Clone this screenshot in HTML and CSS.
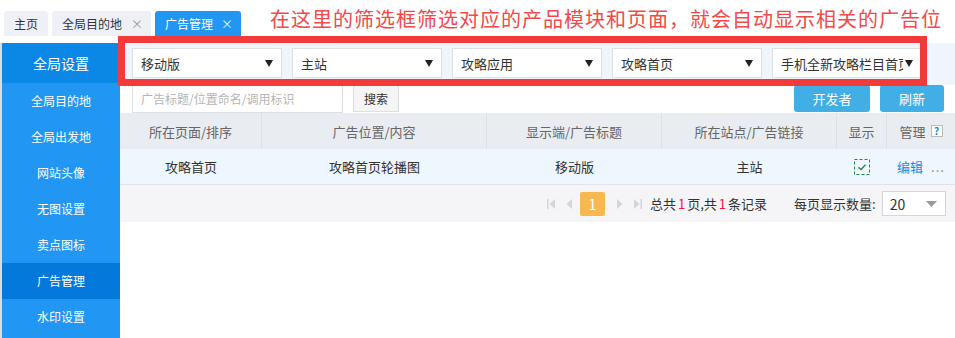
FILE: index.html
```html
<!DOCTYPE html>
<html lang="zh-CN">
<head>
    <meta charset="UTF-8">
    <meta name="viewport" content="width=device-width, initial-scale=1.0">
    <title>广告管理</title>
    <link rel="stylesheet" href="styles.css">
</head>
<body>
<div class="page">
    <!-- Tab bar -->
    <div class="tabs">
        <div class="tab">主页</div>
        <div class="tab">全局目的地<span class="close">×</span></div>
        <div class="tab active">广告管理<span class="close">×</span></div>
    </div>

    <div class="layout">
        <!-- Sidebar -->
        <div class="sidebar">
            <div class="side-head">全局设置</div>
            <div class="side-item">全局目的地</div>
            <div class="side-item">全局出发地</div>
            <div class="side-item">网站头像</div>
            <div class="side-item">无图设置</div>
            <div class="side-item">卖点图标</div>
            <div class="side-item active">广告管理</div>
            <div class="side-item">水印设置</div>
        </div>

        <!-- Main -->
        <div class="main">
            <div class="filters">
                <div class="select"><span class="val">移动版</span><span class="caret"></span></div>
                <div class="select"><span class="val">主站</span><span class="caret"></span></div>
                <div class="select"><span class="val">攻略应用</span><span class="caret"></span></div>
                <div class="select"><span class="val">攻略首页</span><span class="caret"></span></div>
                <div class="select"><span class="val">手机全新攻略栏目首页</span><span class="caret"></span></div>
            </div>

            <div class="toolbar">
                <div class="search">
                    <input type="text" placeholder="广告标题/位置命名/调用标识">
                    <button class="btn-search">搜索</button>
                </div>
                <div class="actions">
                    <button class="btn-blue dev">开发者</button>
                    <button class="btn-blue">刷新</button>
                </div>
            </div>

            <div class="table">
                <div class="row head">
                    <div class="c1">所在页面/排序</div>
                    <div class="c2">广告位置/内容</div>
                    <div class="c3">显示端/广告标题</div>
                    <div class="c4">所在站点/广告链接</div>
                    <div class="c5">显示</div>
                    <div class="c6">管理 <span class="help">?</span></div>
                </div>
                <div class="row body">
                    <div class="c1">攻略首页</div>
                    <div class="c2">攻略首页轮播图</div>
                    <div class="c3">移动版</div>
                    <div class="c4">主站</div>
                    <div class="c5">
                        <svg width="16" height="16" viewBox="0 0 16 16">
                            <rect x="0.5" y="0.5" width="15" height="15" fill="none" stroke="#1e8a3c" stroke-dasharray="3 2"/>
                            <path d="M4.5 8.2 L7 10.5 L11.5 5.8" fill="none" stroke="#1e8a3c" stroke-width="1.3"/>
                        </svg>
                    </div>
                    <div class="c6 ops"><span class="edit">编辑</span><span class="more">...</span></div>
                </div>
            </div>

            <div class="pager">
                <span class="pg-icon">
                    <svg width="10" height="12" viewBox="0 0 10 12"><rect x="1" y="1" width="1.5" height="10" fill="#d5d5d5"/><path d="M9 1 L3.5 6 L9 11 Z" fill="#d5d5d5"/></svg>
                </span>
                <span class="pg-icon">
                    <svg width="8" height="12" viewBox="0 0 8 12"><path d="M7 1 L1.5 6 L7 11 Z" fill="#d5d5d5"/></svg>
                </span>
                <span class="pg-num">1</span>
                <span class="pg-icon">
                    <svg width="8" height="12" viewBox="0 0 8 12"><path d="M1 1 L6.5 6 L1 11 Z" fill="#d5d5d5"/></svg>
                </span>
                <span class="pg-icon">
                    <svg width="10" height="12" viewBox="0 0 10 12"><path d="M1 1 L6.5 6 L1 11 Z" fill="#d5d5d5"/><rect x="7.5" y="1" width="1.5" height="10" fill="#d5d5d5"/></svg>
                </span>
                <span class="pg-text">总共<em>1</em>页,共<em>1</em>条记录</span>
                <span class="pg-size">每页显示数量:</span>
                <div class="pg-select">20
                    <svg width="11" height="6" viewBox="0 0 11 6"><path d="M0 0 L11 0 L5.5 6 Z" fill="#999"/></svg>
                </div>
            </div>
        </div>
    </div>

    <!-- Annotation over the screenshot -->
    <div class="note">在这里的筛选框筛选对应的产品模块和页面，就会自动显示相关的广告位</div>
    <div class="note-box"></div>
</div>
</body>
</html>
```

FILE: styles.css
```css
* {
    box-sizing: border-box;
}
body {
    margin: 0;
    padding: 0;
    background: #fff;
    font-family: "Noto Sans CJK SC", "Noto Sans", sans-serif;
    font-size: 13px;
    color: #333;
}
.page {
    position: relative;
    width: 955px;
    height: 338px;
    overflow: hidden;
    white-space: nowrap;
}
.tabs {
    height: 43px;
    display: flex;
    align-items: flex-start;
    gap: 4px;
    padding: 11px 0 0 4px;
}
.tab {
    height: 25px;
    padding: 0 8px 0 10px;
    background: #eef0f6;
    border-radius: 3px 3px 0 0;
    font-size: 12px;
    color: #333;
    display: flex;
    align-items: center;
}
.tab:first-child {
    padding: 0 10px;
}
.tab .close {
    margin-left: 9px;
    color: #999;
    font-size: 12px;
}
.tab.active {
    background: #2196f3;
    color: #fff;
}
.tab.active .close {
    color: #e6f2ff;
    margin-left: 8px;
}
.layout {
    display: flex;
    height: 295px;
}
.sidebar {
    width: 120px;
    flex-shrink: 0;
    border-left: 2px solid #d9dce3;
    background: #2196f3;
    color: #fff;
}
.side-head {
    height: 40px;
    line-height: 40px;
    text-align: center;
    background: #0b87e6;
    font-size: 14px;
}
.side-item {
    height: 36px;
    line-height: 36px;
    text-align: center;
    font-size: 12px;
}
.side-item.active {
    background: #0379dc;
}
.main {
    flex: 1;
    display: flex;
    flex-direction: column;
}
.filters {
    height: 42px;
    background: #f0f5fb;
    display: flex;
    gap: 10px;
    padding: 5px 0 0 12px;
}
.select {
    width: 150px;
    flex-shrink: 0;
    height: 30px;
    background: #fff;
    border: 1px solid #dcdfe4;
    display: flex;
    align-items: center;
    justify-content: space-between;
    padding: 0 8px;
    font-size: 13px;
    color: #333;
}
.select .val {
    overflow: hidden;
    flex: 1;
}
.select .caret {
    width: 0;
    height: 0;
    border-left: 4px solid transparent;
    border-right: 4px solid transparent;
    border-top: 7px solid #222;
    margin-left: 2px;
    flex-shrink: 0;
}
.toolbar {
    height: 28px;
    display: flex;
    justify-content: space-between;
    align-items: flex-start;
}
.search {
    display: flex;
    gap: 10px;
    padding-left: 12px;
}
.search input {
    width: 211px;
    height: 28px;
    border: 1px solid #dcdfe4;
    border-top: none;
    padding: 0 8px;
    font-family: inherit;
    font-size: 12px;
    outline: none;
}
.search input::placeholder {
    color: #b5b5b5;
}
.btn-search {
    width: 46px;
    height: 27px;
    border: 1px solid #dcdfe4;
    border-top: none;
    background: #f5f5f5;
    font-family: inherit;
    font-size: 12px;
    color: #333;
    padding: 0;
}
.actions {
    display: flex;
    gap: 10px;
    padding-right: 11px;
}
.btn-blue {
    width: 64px;
    height: 27px;
    border: none;
    border-radius: 3px;
    background: #42aee6;
    color: #fff;
    font-family: inherit;
    font-size: 13px;
    padding: 0;
}
.btn-blue.dev {
    width: 76px;
}
.row {
    display: flex;
    height: 36px;
}
.row > div {
    display: flex;
    align-items: center;
    justify-content: center;
    flex-shrink: 0;
}
.row.head {
    background: #e9ecf1;
    color: #666;
}
.row.head > div {
    border-right: 1px solid #dde0e6;
}
.row.head > div:last-child {
    border-right: none;
}
.row.body {
    background: #eef7fe;
    border-bottom: 1px solid #dfe2e8;
}
.c1 { width: 142px; }
.c2 { width: 225px; }
.c3 { width: 175px; }
.c4 { width: 175px; }
.c5 { width: 50px; }
.c6 { width: 68px; }
.help {
    display: inline-block;
    width: 12px;
    height: 12px;
    line-height: 10px;
    margin-left: 5px;
    border: 1px solid #bbb;
    background: #fff;
    color: #1a8be0;
    font-size: 10px;
    font-weight: bold;
    text-align: center;
}
.ops {
    gap: 8px;
}
.edit {
    color: #1a8be0;
}
.more {
    color: #888;
    letter-spacing: 1px;
}
.pager {
    height: 37px;
    background: #f5f5f8;
    display: flex;
    align-items: center;
    padding-left: 422px;
}
.pager > * {
    flex-shrink: 0;
}
.pg-icon {
    display: flex;
    align-items: center;
    width: 18px;
    justify-content: center;
}
.pg-num {
    width: 25px;
    height: 24px;
    line-height: 24px;
    text-align: center;
    background: #f7b84f;
    color: #fff;
    border-radius: 2px;
    font-size: 14px;
    margin: 0 6px 0 2px;
}
.pg-text {
    margin-left: 3px;
    font-size: 13px;
    color: #333;
}
.pg-text em {
    font-style: normal;
    color: #f0143c;
    margin: 0 2px;
}
.pg-size {
    margin-left: 27px;
    font-size: 13px;
    color: #333;
}
.pg-select {
    width: 64px;
    height: 25px;
    margin-left: 6px;
    background: #fff;
    border: 1px solid #d5d5d5;
    display: flex;
    align-items: center;
    justify-content: space-between;
    padding: 0 8px 0 7px;
    font-size: 14px;
}
.note {
    position: absolute;
    left: 270px;
    top: 4px;
    font-size: 20px;
    letter-spacing: 1px;
    color: #f04a4a;
}
.note-box {
    position: absolute;
    left: 118px;
    top: 36px;
    width: 809px;
    height: 50px;
    border: 7px solid #f33a3a;
}
```
